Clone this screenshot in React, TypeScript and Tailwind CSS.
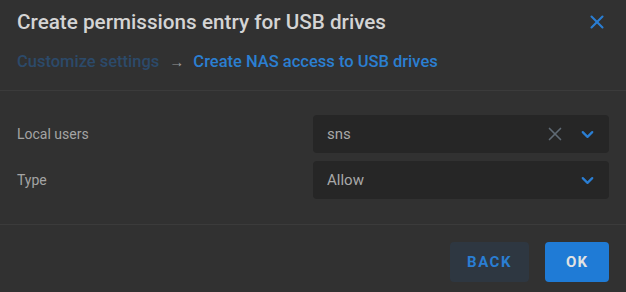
import { X, ChevronDown } from "lucide-react";

function SelectBox({ value, clearable }: { value: string; clearable?: boolean }) {
    return (
        <div className="flex h-[38px] w-[296px] items-center rounded bg-[#262626] pl-[14px] pr-[12px]">
            <span className="flex-1 text-[15px] text-[#a9a9a9]">{value}</span>
            {clearable && (
                <X className="mr-[12px] h-[22px] w-[22px] text-[#5f6a75]" strokeWidth={1.8} />
            )}
            <ChevronDown className="h-[19px] w-[19px] text-[#2a7ed3]" strokeWidth={2.8} />
        </div>
    );
}

export default function App() {
    return (
        <div
            className="flex h-[292px] w-[626px] flex-col bg-[#313131]"
            style={{ fontFamily: "Roboto, 'Liberation Sans', sans-serif" }}
        >
            <div className="h-[91px] border-b border-[#3b3b3b] pl-[17px] pr-[18px] pt-[8px]">
                <div className="flex items-center justify-between">
                    <h1 className="text-[20.7px] font-medium leading-7 text-[#d4d4d4]">
                        Create permissions entry for USB drives
                    </h1>
                    <X className="h-[22px] w-[22px] text-[#2a7ed3]" strokeWidth={2.3} />
                </div>
                <div className="mt-[16px] flex items-center text-[16.5px] font-medium leading-5">
                    <span className="text-[#2c4a6a]">Customize settings</span>
                    <span className="ml-[10px] mr-[9px] text-[15px] text-[#9a9a9a]">→</span>
                    <span className="text-[#2b7fd1]">Create NAS access to USB drives</span>
                </div>
            </div>

            <div className="flex flex-col gap-2 border-b border-[#3b3b3b] pb-[25px] pl-[17px] pr-[17px] pt-[24px]">
                <div className="flex items-center justify-between">
                    <span className="text-[14px] text-[#a4a4a4]">Local users</span>
                    <SelectBox value="sns" clearable />
                </div>
                <div className="flex items-center justify-between">
                    <span className="text-[14px] text-[#a4a4a4]">Type</span>
                    <SelectBox value="Allow" />
                </div>
            </div>

            <div className="flex justify-end gap-4 pr-[17px] pt-[17px]">
                <button className="h-10 w-[79px] rounded bg-[#2e3741] text-[15px] font-bold tracking-[1.5px] text-[#2a7ed3]">
                    BACK
                </button>
                <button className="h-10 w-[64px] rounded bg-[#1f7bd6] text-[15px] font-bold tracking-[1px] text-[#e2e2e2]">
                    OK
                </button>
            </div>
        </div>
    );
}
